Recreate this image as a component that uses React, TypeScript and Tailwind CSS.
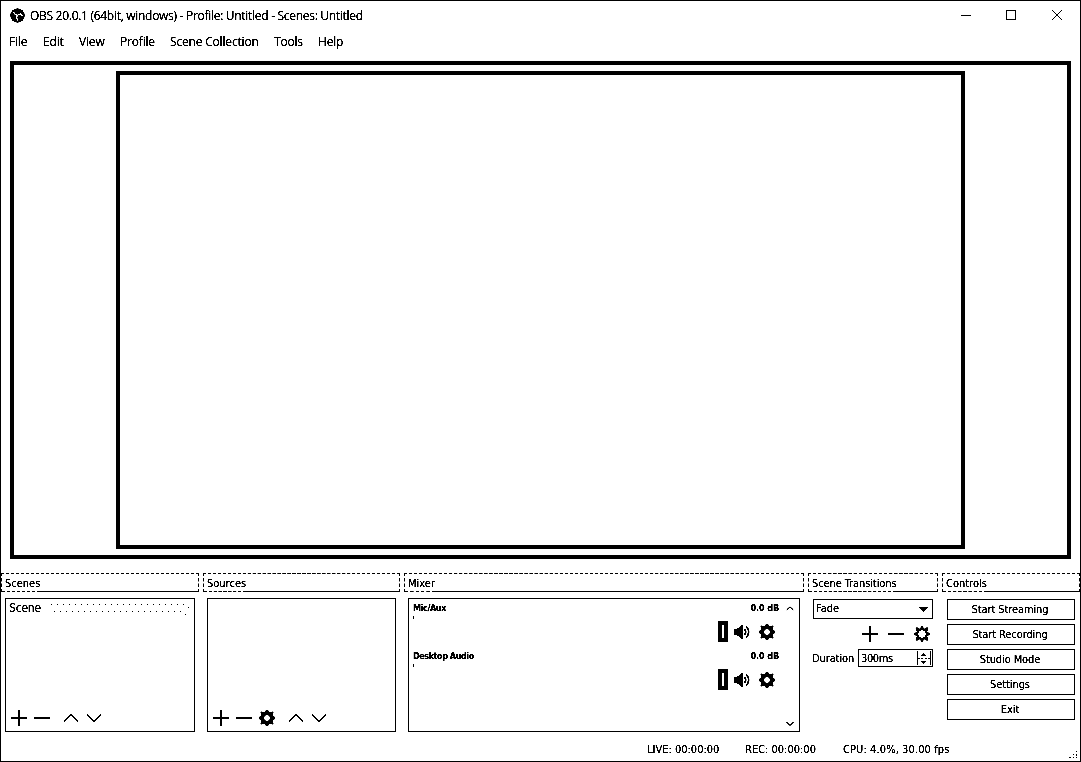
import React from "react";

const Plus = () => (
  <svg width="16" height="16" shapeRendering="crispEdges" className="shrink-0">
    <path d="M0 7h16v2H0z M7 0h2v16H7z" />
  </svg>
);
const Minus = () => (
  <svg width="16" height="16" shapeRendering="crispEdges" className="shrink-0">
    <path d="M0 7h16v2H0z" />
  </svg>
);
const Up = () => (
  <svg width="16" height="16" className="shrink-0" fill="none" stroke="black" strokeWidth="1.2">
    <path d="M1 11.5 8 4.7 15 11.5" />
  </svg>
);
const Down = () => (
  <svg width="16" height="16" className="shrink-0" fill="none" stroke="black" strokeWidth="1.2">
    <path d="M1 4.5 8 11.3 15 4.5" />
  </svg>
);
const Gear = () => (
  <svg width="16" height="16" className="shrink-0" fillRule="evenodd">
    <path d="M7 0h2l1 2 1.200.4L13.500 1.500 14.500 2.500 13.600 5 14 6l2 1v2l-2 1-.4 1 .9 2.500-1 1-2.300-.9L10 14l-1 2H7l-1-2-1.200-.4L2.500 14.500l-1-1L2.400 11 2 10 0 9V7l2-1 .4-1L1.500 2.500l1-1 2.300.9L6 2zM8 4.800 5.700 5.800 4.800 8l.9 2.200L8 11.200l2.300-1L11.200 8l-.9-2.200z" />
  </svg>
);
const OutlineGear = () => (
  <svg width="16" height="16" className="shrink-0" fillRule="evenodd">
    <path d="M7.300 0h1.400l1.200 3 3.300-1.700 1.200 1.200L12.800 6 16 7.300v1.400L12.800 10l1.600 3.500-1.200 1.200L9.900 13l-1.200 3H7.300l-1.200-3-3.300 1.700-1.200-1.200L3.200 10 0 8.700V7.300L3.200 6 1.600 2.500l1.200-1.200L6.100 3zM8 4 5 5 4 8l1 3 3 1 3-1 1-3-1-3z" />
  </svg>
);
const Speaker = () => (
  <svg width="17" height="16" className="shrink-0">
    <path d="M0 5h3l1-1h1l3-3h1v14H8l-3-3H4l-1-1H0z" />
    <path d="M10.500 5.300q2.400 2.700 0 5.400M12.300 2.500q4.700 5.500 0 11" fill="none" stroke="black" strokeWidth="1.400" />
  </svg>
);

const Logo = () => (
  <svg width="15" height="15" viewBox="0 0 15 15" className="shrink-0">
    <circle cx="7.500" cy="7.500" r="7.100" />
    <path d="M3.500 3.500q.3 3 3.700 3.700 3-.2 4.300-2.700M7.300 7q-1.300 2.600.6 5.500M10 6.200q2 .3 2.500 2" fill="none" stroke="white" strokeWidth="1.500" />
  </svg>
);

function DockTitle({ text, className }: { text: string; className: string }) {
  return (
    <div className={`flex h-[19px] border border-b-0 border-dashed border-black leading-[20px] ${className}`}>
      <span className="h-[18px] border-b border-dashed border-black pl-[3px]">{text}</span>
      <span className="h-[18px] flex-1 border-b border-black" />
    </div>
  );
}

function Channel({ name, className }: { name: string; className: string }) {
  return (
    <div className="h-12">
      <div className="flex h-[17px] justify-between pr-[20px] pl-1 text-[9px] leading-[19px] font-bold">
        <span className={className}>{name}</span>
        <span className="tracking-[-0.1px]">0.0 dB</span>
      </div>
      <div className="flex h-[26px] pl-1">
        <div className="h-[3px] w-px bg-black" />
        <div className="mt-[5px] ml-[304px] h-[21px] w-[10px] border-4 border-black bg-white" />
        <div className="mt-[8px] ml-[6px]"><Speaker /></div>
        <div className="mt-[8px] ml-[8px]"><Gear /></div>
      </div>
    </div>
  );
}

const menus: [string, string][] = [
  ["File", "w-[34px]"],
  ["Edit", "w-[36px]"],
  ["View", "w-[41px]"],
  ["Profile", "w-[50px]"],
  ["Scene Collection", "w-[104px]"],
  ["Tools", "w-[44px]"],
  ["Help", "w-[30px]"],
];

const buttons = ["Start Streaming", "Start Recording", "Studio Mode", "Settings", "Exit"];

export default function App() {
  return (
    <div className="flex h-[762px] w-[1081px] flex-col overflow-hidden border border-black bg-white font-['DejaVu_Sans_Condensed','DejaVu_Sans',sans-serif] text-[11px] whitespace-nowrap text-black brightness-75 contrast-[5]">
      <header className="flex h-[29px] shrink-0 items-center pl-[9px] font-['Open_Sans',sans-serif] text-[12px]">
        <Logo />
        <span className="ml-[5px] tracking-[-0.29px]">OBS 20.0.1 (64bit, windows) - Profile: Untitled - Scenes: Untitled</span>
        <svg width="101" height="11" className="mr-[18px] ml-auto" shapeRendering="crispEdges">
          <path d="M0 5h10v1H0z" />
          <path d="M45.500.5h9v9h-9z" fill="none" stroke="black" />
          <path d="M91 0l10 10M101 0l-10 10" stroke="black" strokeWidth="0.9" shapeRendering="auto" />
        </svg>
      </header>
      <nav className="flex h-[31px] shrink-0 pl-2 font-['Open_Sans',sans-serif] text-[12px] leading-[24px]">
        {menus.map(([m, w]) => (
          <span key={m} className={`tracking-[-0.18px] ${w}`}>{m}</span>
        ))}
      </nav>
      <main className="ml-[9px] h-[498px] w-[1061px] shrink-0 border-4 border-black pt-[6px] pl-[102px]">
        <div className="h-[478px] w-[849px] border-4 border-black" />
      </main>
      <div className="mt-[14px] flex h-[159px] shrink-0 items-start">
        <section className="w-[202px]">
          <DockTitle text="Scenes" className="w-[198px]" />
          <div className="mt-[6px] ml-1 flex h-[134px] w-[190px] flex-col border border-black">
            <div className="flex h-[20px] pl-[3px] text-[12px] leading-[19px]">
              <span className="w-[42px] tracking-[-0.2px]">Scene</span>
              <svg width="140" height="20" shapeRendering="crispEdges">
                {Array.from({ length: 23 }, (_, i) => (
                  <rect key={i} x={i * 6} y="5" width="1" height="1" />
                ))}
                {Array.from({ length: 22 }, (_, i) => (
                  <rect key={i} x={i * 6 + 3} y="12" width="1" height="1" />
                ))}
                <path d="M137 8h1v1h-1zM134 15h1v1h-1z" />
              </svg>
            </div>
            <div className="mt-auto flex pb-[5px] pl-[5px]">
              <Plus />
              <div className="ml-[7px]"><Minus /></div>
              <div className="ml-[13px]"><Up /></div>
              <div className="ml-[7px]"><Down /></div>
            </div>
          </div>
        </section>
        <section className="w-[201px]">
          <DockTitle text="Sources" className="w-[197px]" />
          <div className="mt-[6px] ml-1 flex h-[134px] w-[189px] items-end border border-black pb-[5px] pl-[5px]">
            <Plus />
            <div className="ml-[7px]"><Minus /></div>
            <div className="ml-[7px]"><Gear /></div>
            <div className="ml-[13px]"><Up /></div>
            <div className="ml-[7px]"><Down /></div>
          </div>
        </section>
        <section className="w-[404px]">
          <DockTitle text="Mixer" className="w-[400px]" />
          <div className="relative mt-[6px] ml-1 h-[134px] w-[392px] border border-black">
            <Channel name="Mic/Aux" className="tracking-[-0.4px]" />
            <Channel name="Desktop Audio" className="tracking-[-0.45px]" />
            <svg width="8" height="121" className="absolute top-[7px] right-[5px]" fill="none" stroke="black" strokeWidth="0.9">
              <path d="M.5 4 4 .8 7.500 4M.5 116 4 119.500 7.500 116" />
            </svg>
          </div>
        </section>
        <section className="w-[134px]">
          <DockTitle text="Scene Transitions" className="w-[130px] tracking-[-0.1px]" />
          <div className="mt-[7px] ml-[5px] flex h-[20px] w-[120px] items-center justify-between border border-black pr-[4px] pl-[2px]">
            <span>Fade</span>
            <svg width="9" height="5" shapeRendering="crispEdges"><path d="M0 0h9v1H0zM1 1h7v1H1zM2 2h5v1H2zM3 3h3v1H3zM4 4h1v1H4z" /></svg>
          </div>
          <div className="mt-[7px] ml-[54px] flex gap-[10px]">
            <Plus />
            <Minus />
            <OutlineGear />
          </div>
          <div className="mt-[7px] flex h-[18px] pl-1 leading-[19px]">
            <span className="w-[46px] tracking-[-0.1px]">Duration</span>
            <div className="flex w-[75px] justify-between border border-black pl-[2px] leading-[17px]">
              <span className="tracking-[-0.4px]">300ms</span>
              <svg width="15" height="16" shapeRendering="crispEdges">
                <path d="M0 1h1v14H0zM13 1h1v14h-1zM0 8h3v1H0zM4 8h2v1H4zM8 8h2v1H8zM11 8h2v1h-2zM6 3h1v1H6zM5 4h3v1H5zM4 5h5v1H4zM4 11h5v1H4zM5 12h3v1H5zM6 13h1v1H6z" />
              </svg>
            </div>
          </div>
        </section>
        <section className="w-[138px]">
          <DockTitle text="Controls" className="w-[138px]" />
          <div className="mt-[7px] ml-[5px] flex w-[128px] flex-col gap-1">
            {buttons.map((b) => (
              <div key={b} className="h-[21px] border border-black pr-[2px] text-center leading-[20px] tracking-[-0.1px]">{b}</div>
            ))}
          </div>
        </section>
      </div>
      <footer className="flex flex-1 items-start pl-[646px] leading-[36px]">
        <span className="w-[98px]">LIVE: 00:00:00</span>
        <span className="w-[98px]">REC: 00:00:00</span>
        <span className="tracking-[0.1px]">CPU: 4.0%, 30.00 fps</span>
        <svg width="9" height="9" className="mt-[19px] mr-[2px] ml-auto" shapeRendering="crispEdges">
          <path d="M7 0h1v1H7zM4 3h1v1H4zM7 3h1v2H7zM0 6h2v1H0zM4 6h1v1H4zM7 6h1v1H7z" />
        </svg>
      </footer>
    </div>
  );
}
